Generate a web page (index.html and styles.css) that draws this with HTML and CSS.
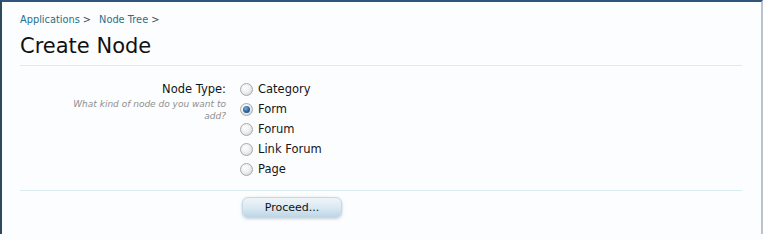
FILE: index.html
```html
<!DOCTYPE html>
<html>
<head>
<meta charset="utf-8">
<link rel="stylesheet" href="styles.css">
</head>
<body>
<div class="frame">
  <div class="content">
    <nav class="breadcrumb">
      <a class="crumb" href="#">Applications</a><span class="arrow">&gt;</span><a class="crumb" href="#">Node Tree</a><span class="arrow">&gt;</span>
    </nav>
    <h1 class="title">Create Node</h1>
    <form class="form">
      <div class="ctrl-unit">
        <div class="label-col">
          <div class="label">Node Type:</div>
          <div class="hint">What kind of node do you want to add?</div>
        </div>
        <ul class="options">
          <li class="option"><span class="radio"></span><span>Category</span></li>
          <li class="option"><span class="radio checked"></span><span>Form</span></li>
          <li class="option"><span class="radio"></span><span>Forum</span></li>
          <li class="option"><span class="radio"></span><span>Link Forum</span></li>
          <li class="option"><span class="radio"></span><span>Page</span></li>
        </ul>
      </div>
      <div class="submit-unit">
        <button type="button" class="button">Proceed...</button>
      </div>
    </form>
  </div>
</div>
</body>
</html>
```

FILE: styles.css
```css
html, body {
  margin: 0;
  padding: 0;
  background: #fcfdfe;
}
body {
  font-family: "DejaVu Sans", Verdana, sans-serif;
  color: #141414;
}
.frame {
  box-sizing: border-box;
  height: 234px;
  width: 763px;
  border-top: 2px solid #2f557a;
  border-left: 2px solid #2e4a5c;
  border-right: 2px solid #b9c3cb;
  background: #fcfdfe;
}
.content {
  padding: 10px 19px 0 18px;
}
.breadcrumb {
  font-size: 9.8px;
  line-height: 16px;
  height: 16px;
}
.crumb {
  color: #26708a;
  text-decoration: none;
}
.arrow {
  color: #4a4a4a;
  margin: 0 8px 0 3px;
}
.title {
  font-family: "DejaVu Sans", Verdana, sans-serif;
  font-weight: normal;
  font-size: 21px;
  line-height: 26px;
  margin: 5px 0 0 0;
  padding-bottom: 6px;
  border-bottom: 1px solid #d9ecf0;
  color: #111;
}
.form {
  margin: 0;
}
.ctrl-unit {
  display: grid;
  grid-template-columns: 206px 1fr;
  column-gap: 14px;
  padding-top: 13px;
  padding-bottom: 11px;
  border-bottom: 1px solid #d9ecf0;
}
.label-col {
  text-align: right;
}
.label {
  font-size: 11.5px;
  line-height: 20px;
  color: #151515;
}
.hint {
  font-size: 9px;
  font-style: italic;
  color: #8f8f8f;
  line-height: 12px;
  padding-left: 48px;
  margin-top: -1px;
}
.options {
  list-style: none;
  margin: 0;
  padding: 0;
}
.option {
  display: flex;
  align-items: center;
  gap: 5px;
  height: 20px;
  font-size: 11.5px;
  color: #151515;
}
.radio {
  box-sizing: border-box;
  width: 13px;
  height: 13px;
  border-radius: 50%;
  border: 1px solid #a9a9a9;
  background: radial-gradient(circle at 40% 35%, #ffffff 0%, #f2f2f2 40%, #cfcfcf 100%);
  position: relative;
}
.radio.checked::after {
  content: "";
  position: absolute;
  left: 2px;
  top: 2px;
  width: 7px;
  height: 7px;
  border-radius: 50%;
  background: radial-gradient(circle at 40% 35%, #7fb0d8 0%, #2a6aa3 50%, #123f6a 100%);
}
.submit-unit {
  display: flex;
  padding: 6px 0 0 222px;
}
.button {
  box-sizing: border-box;
  width: 100px;
  height: 21px;
  border: 1px solid #c6d8e4;
  border-radius: 6px;
  background: linear-gradient(to bottom, #eef5f9 0%, #dbe9f2 50%, #bcd6e6 100%);
  box-shadow: 0 1px 3px rgba(100, 120, 140, 0.35);
  font-family: "DejaVu Sans", Verdana, sans-serif;
  font-size: 11px;
  color: #111;
  padding: 0;
  cursor: pointer;
}
```
